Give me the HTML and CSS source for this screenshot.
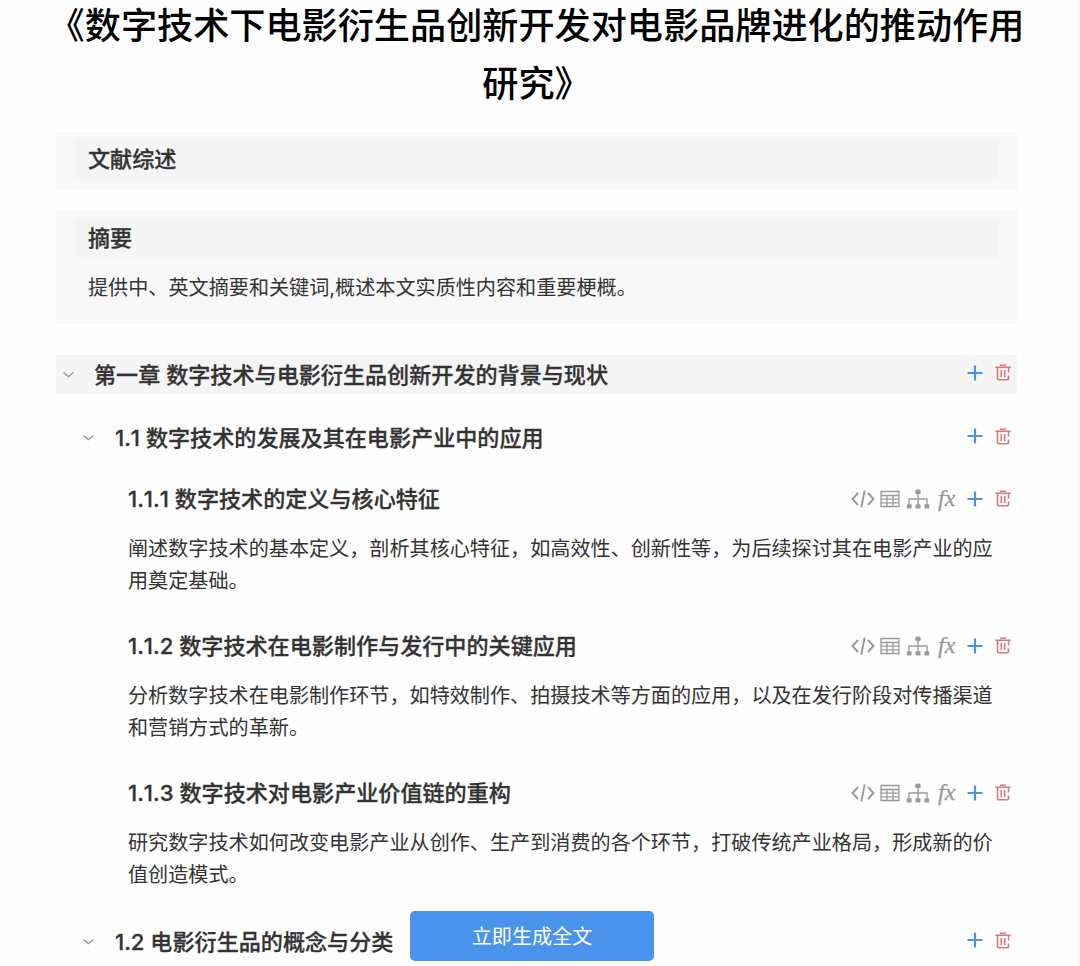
FILE: index.html
```
<!DOCTYPE html>
<html lang="zh-CN">

<head>
    <meta charset="UTF-8">
    <meta name="viewport" content="width=device-width, initial-scale=1.0">
    <title>论文大纲</title>
    <link rel="stylesheet" href="styles.css">
</head>

<body>
    <!-- 图标 -->
    <svg class="sprite">
        <symbol id="down" viewBox="0 0 12 8">
            <path d="M1 1.500l5 4 5-4" fill="none" stroke="currentColor" stroke-width="1.500" />
        </symbol>
        <symbol id="code" viewBox="0 0 24 20">
            <path d="M7 4L1.500 10 7 16M17 4L22.500 10 17 16M13.700 1.500l-3.400 17" fill="none" stroke="currentColor" stroke-width="1.900" />
        </symbol>
        <symbol id="table" viewBox="0 0 20 18">
            <path d="M1 1.500h18v15H1zM1 5.500h18M1 9.200h18M1 12.800h18M7 5.500v11M13 5.500v11" fill="none" stroke="currentColor" stroke-width="1.300" />
        </symbol>
        <symbol id="tree" viewBox="0 0 24 20">
            <path d="M12 4v12M3 16v-6h18v6" fill="none" stroke="currentColor" stroke-width="1.300" />
            <rect x="9.300" y="0.500" width="5.400" height="4.600" rx="1.500" fill="currentColor" />
            <rect x="0.800" y="15.200" width="4.800" height="4.300" rx="0.800" fill="currentColor" />
            <rect x="9.500" y="15.200" width="5" height="4.300" rx="0.800" fill="currentColor" />
            <rect x="18.400" y="15.200" width="4.800" height="4.300" rx="0.800" fill="currentColor" />
        </symbol>
        <symbol id="add" viewBox="0 0 16 16">
            <path d="M8 .5v15M.5 8h15" fill="none" stroke="currentColor" stroke-width="2.200" />
        </symbol>
        <symbol id="del" viewBox="0 0 16 17">
            <path d="M.3 3.200h15.400M5 1.200h6M2.500 3.200V14q0 1.800 1.800 1.800h7.400q1.800 0 1.800-1.800v-2.500M13.500 3.200V8.500M6.300 6v7M9.700 6v7" fill="none" stroke="currentColor" stroke-width="1.600" />
        </symbol>
    </svg>

    <div class="box">
        <h1 class="title">《数字技术下电影衍生品创新开发对电影品牌进化的推动作用研究》</h1>

        <section class="card">
            <h2>文献综述</h2>
        </section>
        <section class="card abstract">
            <h2>摘要</h2>
            <p>提供中、英文摘要和关键词,概述本文实质性内容和重要梗概。</p>
        </section>

        <div class="row chapter">
            <svg class="down"><use href="#down" /></svg>
            <h2>第一章 数字技术与电影衍生品创新开发的背景与现状</h2>
            <div class="tools">
                <svg class="add"><use href="#add" /></svg>
                <svg class="del"><use href="#del" /></svg>
            </div>
        </div>

        <div class="row part">
            <svg class="down"><use href="#down" /></svg>
            <h3>1.1 数字技术的发展及其在电影产业中的应用</h3>
            <div class="tools">
                <svg class="add"><use href="#add" /></svg>
                <svg class="del"><use href="#del" /></svg>
            </div>
        </div>

        <ul class="list">
            <li>
                <div class="row">
                    <h4>1.1.1 数字技术的定义与核心特征</h4>
                    <div class="tools">
                        <svg class="code"><use href="#code" /></svg>
                        <svg class="table"><use href="#table" /></svg>
                        <svg class="tree"><use href="#tree" /></svg>
                        <em>fx</em>
                        <svg class="add"><use href="#add" /></svg>
                        <svg class="del"><use href="#del" /></svg>
                    </div>
                </div>
                <p>阐述数字技术的基本定义，剖析其核心特征，如高效性、创新性等，为后续探讨其在电影产业的应用奠定基础。</p>
            </li>
            <li>
                <div class="row">
                    <h4>1.1.2 数字技术在电影制作与发行中的关键应用</h4>
                    <div class="tools">
                        <svg class="code"><use href="#code" /></svg>
                        <svg class="table"><use href="#table" /></svg>
                        <svg class="tree"><use href="#tree" /></svg>
                        <em>fx</em>
                        <svg class="add"><use href="#add" /></svg>
                        <svg class="del"><use href="#del" /></svg>
                    </div>
                </div>
                <p>分析数字技术在电影制作环节，如特效制作、拍摄技术等方面的应用，以及在发行阶段对传播渠道和营销方式的革新。</p>
            </li>
            <li>
                <div class="row">
                    <h4>1.1.3 数字技术对电影产业价值链的重构</h4>
                    <div class="tools">
                        <svg class="code"><use href="#code" /></svg>
                        <svg class="table"><use href="#table" /></svg>
                        <svg class="tree"><use href="#tree" /></svg>
                        <em>fx</em>
                        <svg class="add"><use href="#add" /></svg>
                        <svg class="del"><use href="#del" /></svg>
                    </div>
                </div>
                <p>研究数字技术如何改变电影产业从创作、生产到消费的各个环节，打破传统产业格局，形成新的价值创造模式。</p>
            </li>
        </ul>

        <div class="row part last">
            <svg class="down"><use href="#down" /></svg>
            <h3>1.2 电影衍生品的概念与分类</h3>
            <div class="tools">
                <svg class="add"><use href="#add" /></svg>
                <svg class="del"><use href="#del" /></svg>
            </div>
        </div>
    </div>

    <button class="btn">立即生成全文</button>
</body>

</html>
```
FILE: styles.css
```
* {
    box-sizing: border-box;
}

body,
h1,
h2,
h3,
h4,
p,
ul {
    margin: 0;
    padding: 0;
    list-style: none;
}

body {
    height: 966px;
    overflow: hidden;
    background: #fefefe;
    border-right: 2px solid #f7f7f7;
    font-family: Inter, 'Noto Sans CJK SC', sans-serif;
    color: #333;
}

.sprite {
    display: none;
}

.box {
    width: 961px;
    margin-left: 56px;
}

.title {
    margin: -6px -10px 22px;
    font-family: 'Noto Sans CJK SC', sans-serif;
    font-size: 36.15px;
    line-height: 58px;
    font-weight: 500;
    text-align: center;
    color: #000;
}

h2,
h3,
h4 {
    font-size: 22.1px;
    line-height: 40px;
    font-weight: 500;
    font-kerning: none;
    -webkit-text-stroke: 0.3px #333;
    white-space: nowrap;
}

.card {
    height: 58px;
    padding: 8px 19px;
    margin-bottom: 20px;
    background: #f8f8f8;
}

.card h2 {
    padding-left: 13px;
    line-height: 39px;
    background: #f5f5f5;
}

.abstract {
    height: 114px;
    padding-top: 9px;
    margin-bottom: 31px;
}

p {
    font-size: 20.12px;
    line-height: 32.2px;
}

.card p {
    margin: 14px 0 0 13px;
}

.row {
    display: flex;
    align-items: center;
    height: 40px;
}

.chapter {
    height: 39px;
    padding-left: 6px;
    background: #f5f5f5;
}

.part {
    margin-top: 24px;
    padding-left: 26px;
}

.down {
    width: 13px;
    height: 8px;
    margin-right: 20px;
    color: #999;
}

.chapter .down {
    margin-right: 19px;
}

.tools {
    display: flex;
    align-items: center;
    margin-left: auto;
    padding-right: 6px;
    color: #999;
}

.chapter .tools,
.part .tools {
    padding-bottom: 4px;
}

.code {
    width: 24px;
    height: 20px;
    margin-right: 5px;
}

.table {
    width: 20px;
    height: 18px;
    margin-right: 6px;
}

.tree {
    width: 24px;
    height: 20px;
    margin-right: 8px;
}

em {
    width: 20px;
    margin: -1px 9px 0 0;
    font-family: 'Liberation Serif', serif;
    font-size: 24px;
    line-height: 24px;
    -webkit-text-stroke: 0.3px #999;
}

.add {
    width: 16px;
    height: 16px;
    margin-right: 12px;
    color: #4a93ec;
}

.del {
    width: 16px;
    height: 17px;
    color: #d87878;
}

.list {
    padding: 20px 0 0 72px;
}

.list li {
    height: 147px;
}

.list .row {
    height: 41px;
}

.list p {
    width: 870px;
    margin-top: 14px;
}

.last {
    margin-top: 3px;
}

.btn {
    position: fixed;
    left: 410px;
    top: 911px;
    width: 244px;
    height: 50px;
    padding-bottom: 3px;
    border: none;
    border-radius: 5px;
    background: #4a93ec;
    font-family: 'Noto Sans CJK SC', sans-serif;
    font-size: 20.1px;
    color: #fff;
}
```
